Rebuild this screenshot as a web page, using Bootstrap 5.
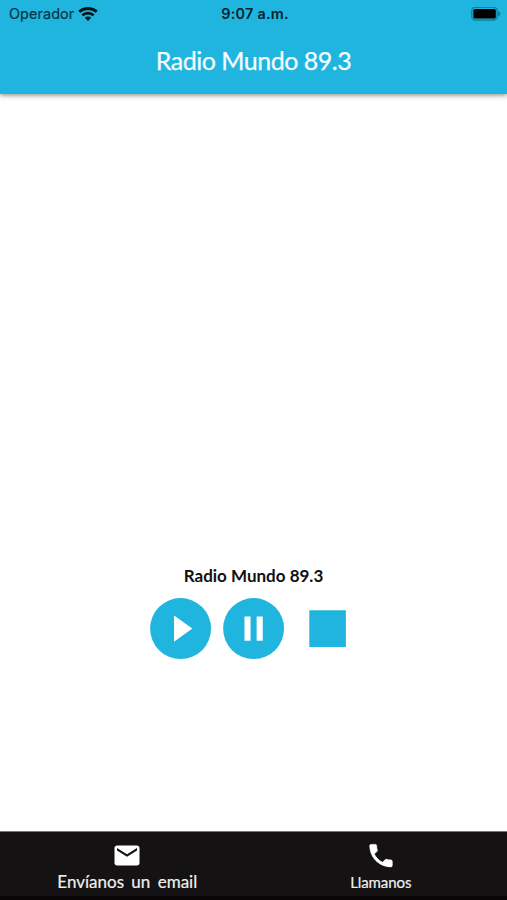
<!DOCTYPE html>
<html lang="es">
<head>
<meta charset="utf-8">
<meta name="viewport" content="width=device-width, initial-scale=1">
<title>Radio Mundo 89.3</title>
<link href="https://cdn.jsdelivr.net/npm/bootstrap@5.3.0/dist/css/bootstrap.min.css" rel="stylesheet">
<style>
body { font-family: Lato, sans-serif; height: 900px; overflow: hidden; }
svg { display: block; }
.app-header { background: #20b5df; height: 94px; box-shadow: 0 1px 5px rgba(0,0,0,.5); }
.status-bar { height: 28px; font-family: Inter, sans-serif; line-height: 28px; padding: 0 6px 0 9px; }
.carrier { font-size: 14.4px; color: #083743; letter-spacing: .1px; -webkit-text-stroke: .2px #083743; }
.clock { font-size: 14.4px; font-weight: 600; color: #06222b; letter-spacing: .25px; }
.app-title { font-size: 25px; line-height: 30px; padding-top: 17px; margin: 0; font-weight: 400; color: #f4fdff; letter-spacing: -.5px; -webkit-text-stroke: .25px #f4fdff; }
.station { font-size: 17px; line-height: 22px; font-weight: 700; color: #111; margin: 0; }
.player { padding-bottom: 166px; }
.controls { padding: 5px 0 0 1px; }
.control { width: 73.2px; height: 73.2px; color: #20b5df; }
.control svg { width: 100%; height: 100%; }
.tab-bar { height: 69px; background: #141213; border-top: 1px solid #777; border-bottom: 4px solid #080607; }
.tab-link { color: #fff; padding: 8px 0 0 1px; }
.tab-label { line-height: 20px; color: #f0f0f0; -webkit-text-stroke: .2px #f0f0f0; }
.label-email { font-size: 17px; word-spacing: 3px; margin-top: 2px; }
.label-call { font-size: 15px; margin-top: 2px; letter-spacing: -.1px; }
</style>
</head>
<body class="d-flex flex-column bg-white">
<header class="app-header flex-shrink-0">
  <div class="status-bar row g-0">
    <div class="col d-flex align-items-center gap-1">
      <span class="carrier">Operador</span>
      <svg width="20" height="15" viewBox="0 0 20 15" fill="none" stroke="#03141a" stroke-width="2.8"><path d="M1.200 4.800C6 .4 14 .4 18.800 4.800M4.300 8.300c3.200-3 8.200-3 11.400 0"/><path d="M6.800 10.700c1.900-1.700 4.500-1.700 6.400 0L10 13.900z" fill="#03141a" stroke="none"/></svg>
    </div>
    <div class="col-auto clock">9:07 a.m.</div>
    <div class="col d-flex justify-content-end align-items-center">
      <svg width="30" height="15" viewBox="0 0 30 15"><rect x=".8" y=".3" width="25.400" height="12.700" rx="3.500" fill="none" stroke="#168099" stroke-width="1.400"/><rect x="2.400" y="2" width="22.400" height="9.400" rx="1.500"/><path d="M27.200 4.200c3 1.200 3 3.800 0 5z" fill="#168099"/></svg>
    </div>
  </div>
  <h1 class="app-title text-center">Radio Mundo 89.3</h1>
</header>

<main class="player flex-grow-1 d-flex flex-column justify-content-end align-items-center">
  <h2 class="station">Radio Mundo 89.3</h2>
  <div class="controls d-flex">
    <button class="control btn p-0 border-0" aria-label="Reproducir"><svg viewBox="0 0 24 24" fill="currentColor"><path d="M12 2a10 10 0 1 0 0 20 10 10 0 0 0 0-20zm-2.150 14.300V7.700l6 4.300z"/></svg></button>
    <button class="control btn p-0 border-0" aria-label="Pausa"><svg viewBox="0 0 24 24" fill="currentColor"><path d="M12 2a10 10 0 1 0 0 20 10 10 0 0 0 0-20zm-1 14H9V8h2zm4 0h-2V8h2z"/></svg></button>
    <button class="control btn p-0 border-0" aria-label="Detener"><svg viewBox="0 0 24 24" fill="currentColor"><path d="M6 6h12v12H6z"/></svg></button>
  </div>
</main>

<nav class="tab-bar row g-0 flex-shrink-0">
  <a href="#" class="tab-link col-6 d-flex flex-column align-items-center text-decoration-none">
    <svg width="30" height="30" viewBox="0 -.3 24 24" fill="currentColor"><path d="M20 4H4c-1.100 0-1.990.900-1.990 2L2 18c0 1.100.900 2 2 2h16c1.100 0 2-.900 2-2V6c0-1.100-.900-2-2-2zm0 4l-8 5-8-5V6l8 5 8-5v2z"/></svg>
    <span class="tab-label label-email">Envíanos un email</span>
  </a>
  <a href="#" class="tab-link col-6 d-flex flex-column align-items-center text-decoration-none">
    <svg width="30" height="30" viewBox="0 -.5 24 24" fill="currentColor" stroke="currentColor" stroke-width=".5"><path d="M6.620 10.790c1.440 2.830 3.760 5.140 6.590 6.590l2.200-2.200c.270-.270.670-.360 1.020-.240 1.120.370 2.330.570 3.570.570.550 0 1 .450 1 1V20c0 .550-.450 1-1 1-9.390 0-17-7.610-17-17 0-.550.450-1 1-1h3.500c.550 0 1 .450 1 1 0 1.250.200 2.450.570 3.570.110.350.030.740-.250 1.020l-2.200 2.200z"/></svg>
    <span class="tab-label label-call">Llamanos</span>
  </a>
</nav>
<script src="https://cdn.jsdelivr.net/npm/bootstrap@5.3.0/dist/js/bootstrap.bundle.min.js"></script>
</body>
</html>
